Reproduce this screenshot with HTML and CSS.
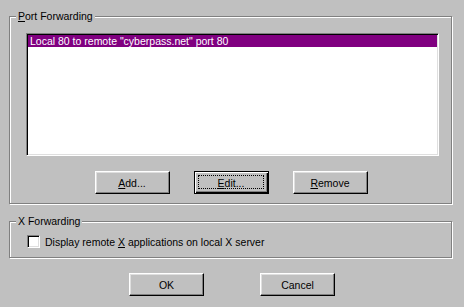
FILE: index.html
```html
<!DOCTYPE html>
<html lang="en">
<head>
    <meta charset="UTF-8">
    <meta name="viewport" content="width=device-width, initial-scale=1.0">
    <title>Tunnels</title>
    <link rel="stylesheet" href="styles.css">
</head>
<body>
    <div class="dialog">
        <fieldset class="group group-ports">
            <legend><u>P</u>ort Forwarding</legend>
            <ul class="listbox">
                <li class="list-item selected">Local 80 to remote "cyberpass.net" port 80</li>
            </ul>
            <div class="button-row ports-buttons">
                <button class="win-btn"><u>A</u>dd...</button>
                <button class="win-btn default"><u>E</u>dit...</button>
                <button class="win-btn"><u>R</u>emove</button>
            </div>
        </fieldset>

        <fieldset class="group group-x">
            <legend>X Forwarding</legend>
            <label class="check-row">
                <span class="checkbox"></span>
                <span>Display remote <u>X</u> applications on local X server</span>
            </label>
        </fieldset>

        <div class="button-row dialog-buttons">
            <button class="win-btn">OK</button>
            <button class="win-btn">Cancel</button>
        </div>
    </div>
</body>
</html>
```

FILE: styles.css
```css
* {
    margin: 0;
    padding: 0;
    box-sizing: border-box;
}

body {
    background: #c0c0c0;
    font-family: "Liberation Sans", Arial, sans-serif;
    font-size: 10.5px;
    color: #000;
    width: 464px;
    height: 307px;
    overflow: hidden;
}

.dialog {
    padding-top: 10px;
}

u {
    text-decoration: underline;
    text-underline-offset: 1px;
}

/* etched group boxes */
.group {
    border: 1px solid #808080;
    box-shadow: inset 1px 1px 0 #fff, 1px 1px 0 #fff;
    margin: 0 12px 0 9px;
    padding: 0 0 9px 6px;
    min-width: 0;
}

.group legend {
    padding: 0 2px;
    line-height: 13px;
    height: 13px;
    background: #c0c0c0;
}

.group-x {
    margin-top: 11px;
}

/* list box */
.listbox {
    list-style: none;
    margin: 10px 0 0 10px;
    width: 413px;
    height: 123px;
    background: #fff;
    border: 1px solid;
    border-color: #808080 #fff #fff #808080;
    box-shadow: inset 1px 1px 0 #000, inset -1px -1px 0 #dfdfdf;
    padding: 1px;
}

.list-item {
    height: 12px;
    line-height: 12px;
    padding-left: 2px;
    white-space: nowrap;
}

.list-item.selected {
    background: #800080;
    color: #fff;
}

/* buttons */
.button-row {
    display: flex;
    justify-content: center;
}

.ports-buttons {
    gap: 24px;
    margin-top: 15px;
    padding-right: 5px;
}

.dialog-buttons {
    gap: 56px;
    margin-top: 15px;
}

.win-btn {
    position: relative;
    width: 75px;
    height: 23px;
    font: inherit;
    color: #000;
    background: #c0c0c0;
    border: 1px solid;
    border-color: #fff #000 #000 #fff;
    box-shadow: inset -1px -1px 0 #808080, inset 1px 1px 0 #dfdfdf;
    cursor: pointer;
}

.win-btn.default {
    border-color: #000;
    box-shadow: inset 1px 1px 0 #fff, inset -1px -1px 0 #000, inset -2px -2px 0 #808080;
}

.win-btn.default::after {
    content: "";
    position: absolute;
    left: 3px;
    top: 3px;
    right: 4px;
    bottom: 4px;
    border: 1px dotted #000;
}

/* checkbox */
.check-row {
    display: flex;
    align-items: center;
    gap: 5px;
    margin: 7px 0 0 11px;
    height: 13px;
}

.checkbox {
    width: 13px;
    height: 13px;
    background: #fff;
    border: 1px solid;
    border-color: #808080 #fff #fff #808080;
    box-shadow: inset 1px 1px 0 #000, inset -1px -1px 0 #dfdfdf;
}
```
